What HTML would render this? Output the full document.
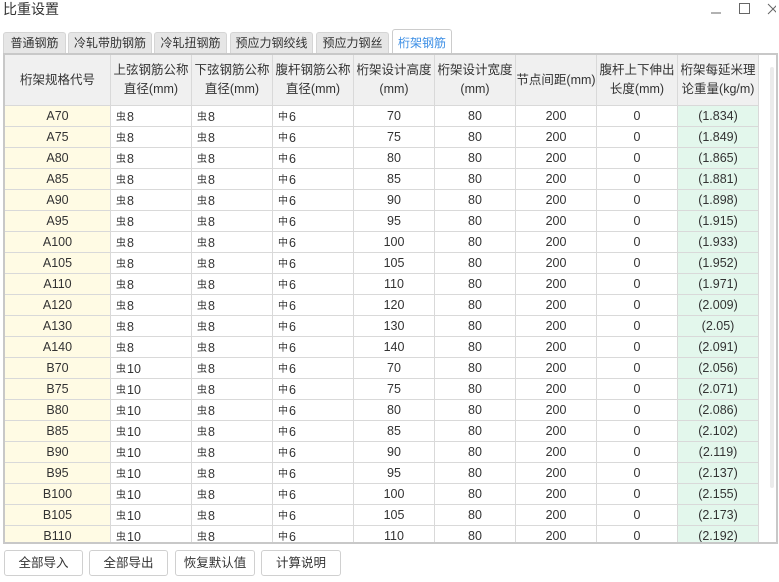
<!DOCTYPE html>
<html><head><meta charset="utf-8"><style>
*{margin:0;padding:0;box-sizing:border-box}
body{width:779px;height:582px;background:#fff;font-family:"Liberation Sans","Noto Sans CJK SC",sans-serif;font-size:12px;color:#333;position:relative;overflow:hidden}
.title{position:absolute;left:3px;top:-1px;font-size:14px;color:#333}
.wc{position:absolute;top:0;color:#555}
.tab{position:absolute;top:32px;height:21px;background:#e6e6e6;border:1px solid #d5d5d5;border-bottom:none;border-radius:3px 3px 0 0;font-size:12px;line-height:20px;text-align:center;color:#333}
.tab.act{background:#fff;color:#3b8ee5;top:29px;height:25px;line-height:26px;border-color:#ccc}
.box{position:absolute;left:3px;top:53px;width:775px;height:491px;border:2px solid #c8c8c8;overflow:hidden;background:#fff}
table{border-collapse:collapse;table-layout:fixed;position:absolute;left:-1px;top:-1px}
td{border:1px solid #d9d9d9;height:21px;text-align:center;padding:0;font-size:12.5px;white-space:nowrap;overflow:hidden}
th{background:#f0f0f0;border:1px solid #d9d9d9;height:51px;font-weight:normal;font-size:12.5px;line-height:19px;color:#333;padding:0}
td.c0{background:#fffbe4}
td.cw{background:#e3f7ec}
td.l{text-align:left;padding-left:5px}
.s{font-size:10px;font-family:"Noto Sans CJK SC",sans-serif;vertical-align:1px;margin-right:1px}
.sb{position:absolute;left:754px;top:0;width:19px;height:489px;background:#fff}
.th{position:absolute;left:11px;top:12px;width:4px;height:421px;background:#ebebeb;border-radius:2px}
.btn{position:absolute;top:550px;height:26px;border:1px solid #d0d0d0;border-radius:3px;background:#fff;text-align:center;line-height:24px;font-size:12.5px}
</style></head><body>
<div class="title">比重设置</div>
<svg class="wc" style="left:706px;top:2px" width="70" height="14"><path d="M5 11h10" stroke="#666" stroke-width="1"/><rect x="33.5" y="1.5" width="10" height="10" fill="none" stroke="#666"/><path d="M62 2l10 10M72 2l-10 10" stroke="#666"/></svg>
<div class="tab" style="left:3px;width:63px">普通钢筋</div>
<div class="tab" style="left:68px;width:84px">冷轧带肋钢筋</div>
<div class="tab" style="left:154px;width:73px">冷轧扭钢筋</div>
<div class="tab" style="left:230px;width:83px">预应力钢绞线</div>
<div class="tab" style="left:316px;width:73px">预应力钢丝</div>
<div class="tab act" style="left:392px;width:60px">桁架钢筋</div>
<div class="box">
<table>
<colgroup><col style="width:106px"><col style="width:81px"><col style="width:81px"><col style="width:81px"><col style="width:81px"><col style="width:81px"><col style="width:81px"><col style="width:81px"><col style="width:81px"></colgroup>
<tr><th>桁架规格代号</th><th>上弦钢筋公称<br>直径(mm)</th><th>下弦钢筋公称<br>直径(mm)</th><th>腹杆钢筋公称<br>直径(mm)</th><th>桁架设计高度<br>(mm)</th><th>桁架设计宽度<br>(mm)</th><th>节点间距(mm)</th><th>腹杆上下伸出<br>长度(mm)</th><th>桁架每延米理<br>论重量(kg/m)</th></tr>
<tbody id="tb"></tbody>
</table>
<div class="sb"><div class="th"></div></div>
</div>
<div class="btn" style="left:4px;width:79px">全部导入</div>
<div class="btn" style="left:89px;width:79px">全部导出</div>
<div class="btn" style="left:175px;width:80px">恢复默认值</div>
<div class="btn" style="left:261px;width:80px">计算说明</div>
<script>
var d=[["A70",8,70,"1.834"],["A75",8,75,"1.849"],["A80",8,80,"1.865"],["A85",8,85,"1.881"],["A90",8,90,"1.898"],["A95",8,95,"1.915"],["A100",8,100,"1.933"],["A105",8,105,"1.952"],["A110",8,110,"1.971"],["A120",8,120,"2.009"],["A130",8,130,"2.05"],["A140",8,140,"2.091"],["B70",10,70,"2.056"],["B75",10,75,"2.071"],["B80",10,80,"2.086"],["B85",10,85,"2.102"],["B90",10,90,"2.119"],["B95",10,95,"2.137"],["B100",10,100,"2.155"],["B105",10,105,"2.173"],["B110",10,110,"2.192"]];
var h="";d.forEach(function(r){h+='<tr><td class="c0">'+r[0]+'</td><td class="l"><span class="s">虫</span>'+r[1]+'</td><td class="l"><span class="s">虫</span>8</td><td class="l"><span class="s">中</span>6</td><td>'+r[2]+'</td><td>80</td><td>200</td><td>0</td><td class="cw">('+r[3]+')</td></tr>';});
document.getElementById("tb").innerHTML=h;
</script>
</body></html>
